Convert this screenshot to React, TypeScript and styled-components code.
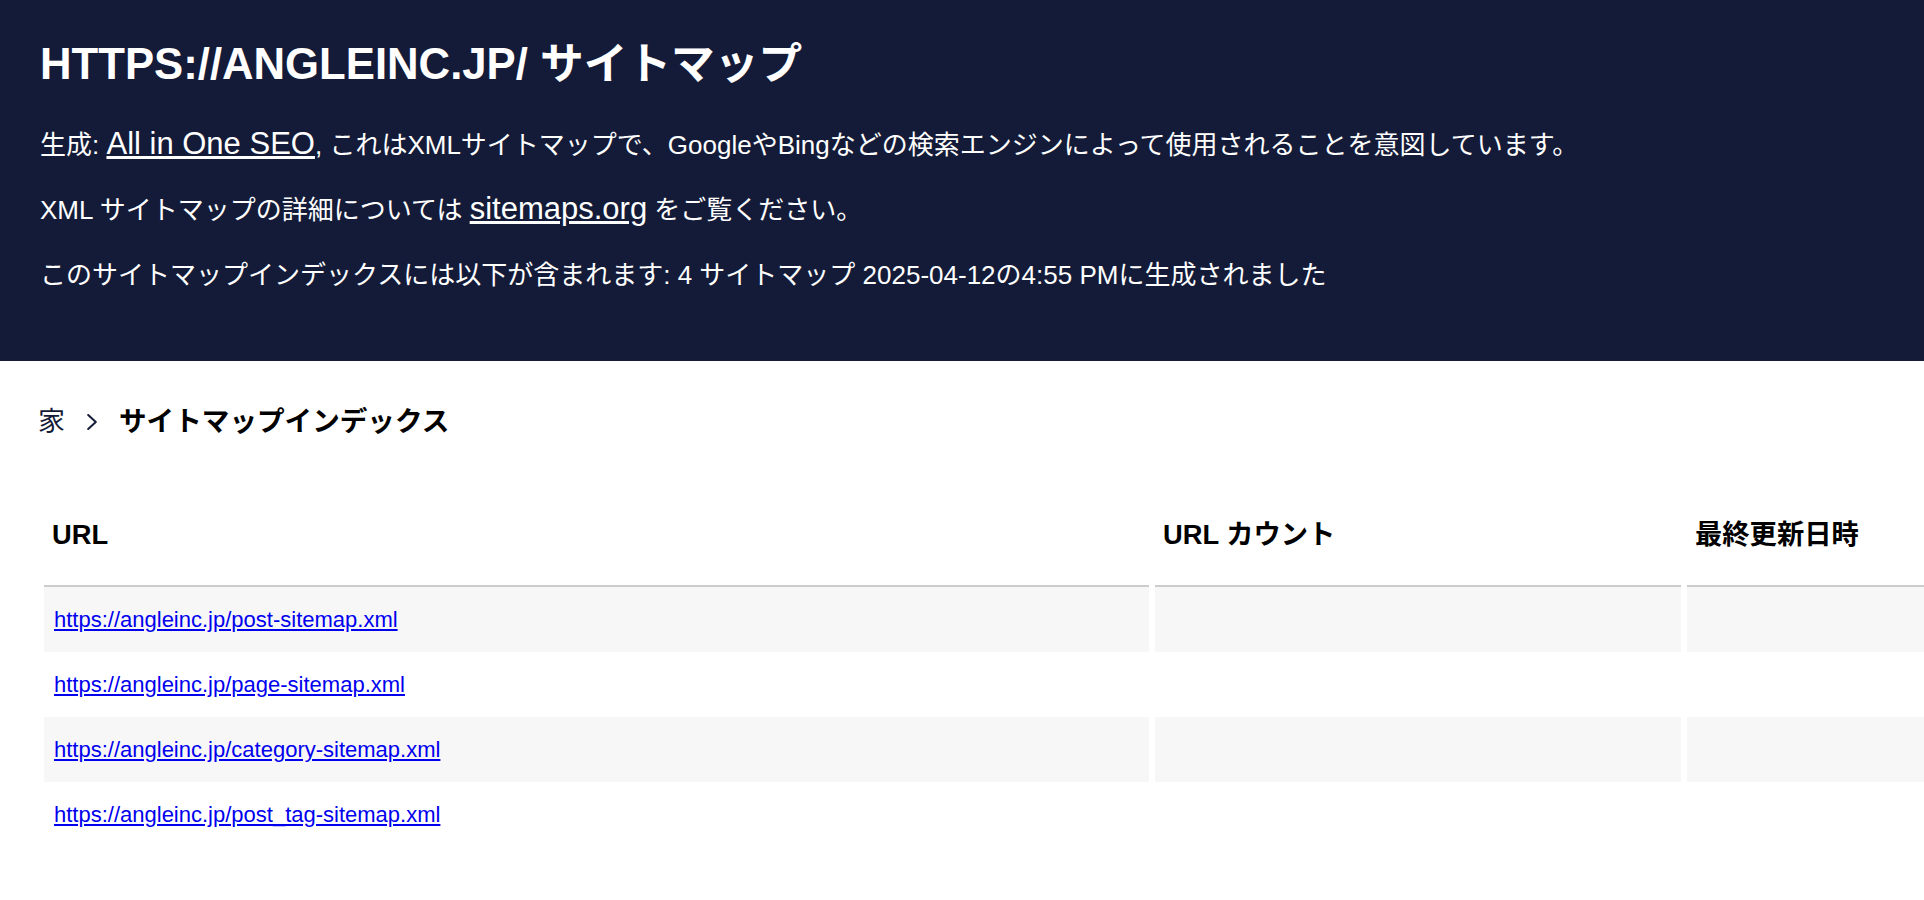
import React from "react";
import styled, { createGlobalStyle } from "styled-components";

const GlobalStyle = createGlobalStyle`
  html, body {
    margin: 0;
    padding: 0;
    background: #ffffff;
  }
  body {
    font-family: "Liberation Sans", Arial, "Noto Sans CJK JP", sans-serif;
    color: #000000;
    overflow-x: hidden;
  }
`;

const Page = styled.div`
  width: 100%;
  min-height: 900px;
  overflow: hidden;
`;

const Header = styled.header`
  background: #141b38;
  color: #ffffff;
  padding: 39px 40px 68px;
  display: flex;
  flex-direction: column;
  gap: 29px;
`;

const Title = styled.h1`
  margin: 0 0 9px;
  font-size: 43.7px;
  line-height: 50px;
  font-weight: 700;
`;

const Info = styled.p`
  margin: 0;
  font-size: 26px;
  line-height: 36px;
  white-space: nowrap;
`;

const HeaderLink = styled.a`
  color: #ffffff;
  font-size: 31px;
  line-height: 1;
  text-decoration: underline;
`;

const Content = styled.main`
  padding: 41px 38px 0;
`;

const Breadcrumb = styled.nav`
  display: flex;
  align-items: center;
  gap: 22px;
  height: 40px;
  font-size: 27px;
  line-height: 40px;
`;

const Crumb = styled.a`
  color: #141b38;
  text-decoration: none;
`;

const Current = styled.span`
  font-weight: 700;
  font-size: 27.6px;
  color: #000000;
`;

const Chevron = () => (
  <svg width="10" height="16" viewBox="0 0 10 16" aria-hidden="true">
    <polyline
      points="1.2,1 8.8,8 1.2,15"
      fill="none"
      stroke="#141b38"
      strokeWidth="2"
      strokeLinecap="round"
      strokeLinejoin="round"
    />
  </svg>
);

const Table = styled.table`
  margin-top: 57px;
  width: 2055px;
  table-layout: fixed;
  border-collapse: separate;
  border-spacing: 6px 0;
`;

const Col = styled.col<{ $w: number }>`
  width: ${(p) => p.$w}px;
`;

const Th = styled.th`
  text-align: left;
  font-size: 27.3px;
  line-height: 32px;
  font-weight: 700;
  padding: 20px 8px 34px;
  border-bottom: 2px solid #cccccc;
  white-space: nowrap;
`;

const Td = styled.td<{ $striped: boolean }>`
  padding: 20px 10px;
  font-size: 22px;
  line-height: 25px;
  background: ${(p) => (p.$striped ? "#f7f7f7" : "transparent")};
  white-space: nowrap;
`;

const RowLink = styled.a`
  color: #0000ee;
  text-decoration: underline;
`;

const sitemaps = [
  "https://angleinc.jp/post-sitemap.xml",
  "https://angleinc.jp/page-sitemap.xml",
  "https://angleinc.jp/category-sitemap.xml",
  "https://angleinc.jp/post_tag-sitemap.xml",
];

export default function App() {
  return (
    <Page>
      <GlobalStyle />
      <Header>
        <Title>HTTPS://ANGLEINC.JP/ サイトマップ</Title>
        <Info>
          生成: <HeaderLink href="#">All in One SEO</HeaderLink>, これはXMLサイトマップで、GoogleやBingなどの検索エンジンによって使用されることを意図しています。
        </Info>
        <Info>
          XML サイトマップの詳細については <HeaderLink href="#">sitemaps.org</HeaderLink> をご覧ください。
        </Info>
        <Info>
          このサイトマップインデックスには以下が含まれます: 4 サイトマップ 2025-04-12の4:55 PMに生成されました
        </Info>
      </Header>
      <Content>
        <Breadcrumb>
          <Crumb href="#">家</Crumb>
          <Chevron />
          <Current>サイトマップインデックス</Current>
        </Breadcrumb>
        <Table>
          <colgroup>
            <Col $w={1105} />
            <Col $w={526} />
            <Col $w={400} />
          </colgroup>
          <thead>
            <tr>
              <Th>URL</Th>
              <Th>URL カウント</Th>
              <Th>最終更新日時</Th>
            </tr>
          </thead>
          <tbody>
            {sitemaps.map((url, i) => (
              <tr key={url}>
                <Td $striped={i % 2 === 0}>
                  <RowLink href="#">{url}</RowLink>
                </Td>
                <Td $striped={i % 2 === 0} />
                <Td $striped={i % 2 === 0} />
              </tr>
            ))}
          </tbody>
        </Table>
      </Content>
    </Page>
  );
}
